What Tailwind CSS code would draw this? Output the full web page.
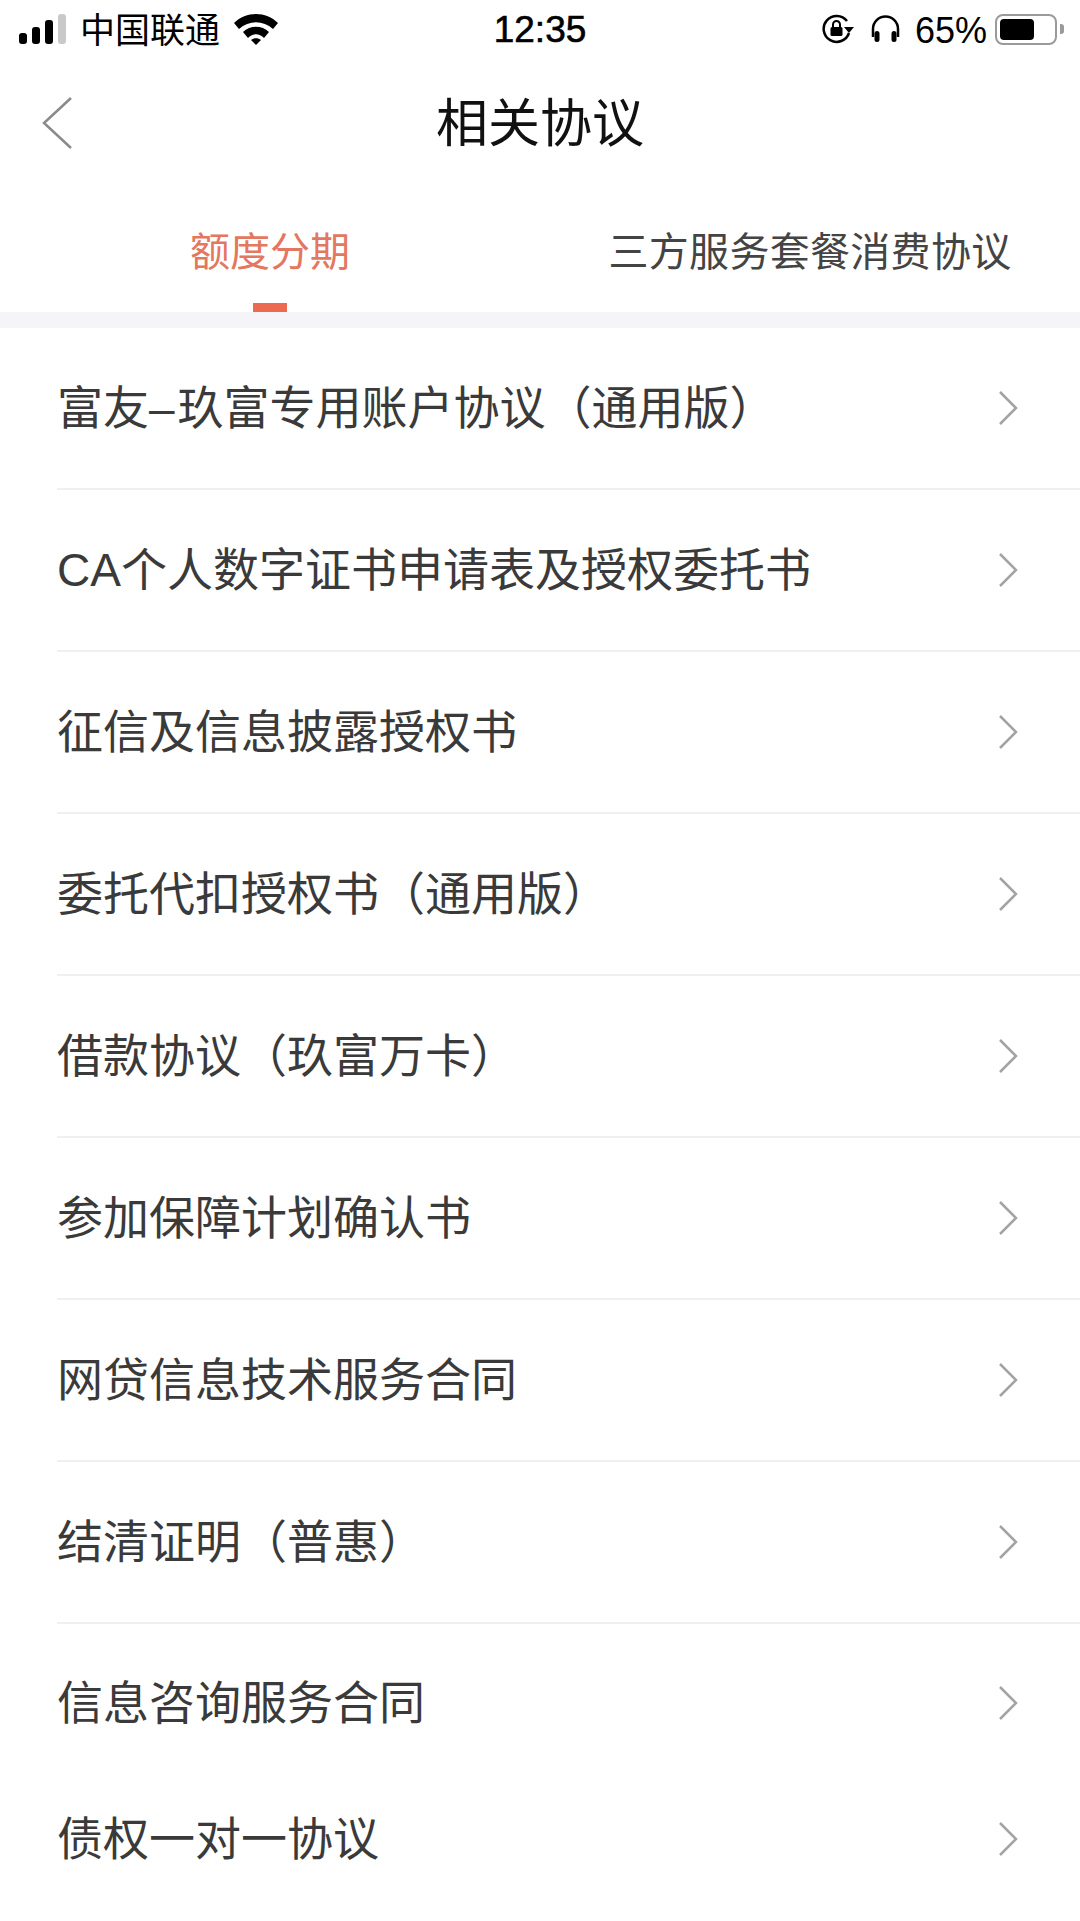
<!DOCTYPE html>
<html lang="zh-CN">
<head>
    <meta charset="UTF-8">
    <title>相关协议</title>
    <script src="https://cdn.jsdelivr.net/npm/@tailwindcss/browser@4"></script>
</head>
<body class="bg-white font-['Liberation_Sans','Noto_Sans_CJK_SC',sans-serif]">
    <div class="w-[1080px] h-[1921px] overflow-hidden bg-white">
        <!-- status bar -->
        <div class="h-[58px] relative flex items-center justify-between text-black">
            <div class="flex items-center pl-[19px]">
                <div class="flex items-end gap-[5px] h-[30px]">
                    <div class="w-[8px] h-[11px] rounded-[3px] bg-black"></div>
                    <div class="w-[8px] h-[17px] rounded-[3px] bg-black"></div>
                    <div class="w-[8px] h-[24px] rounded-[3px] bg-black"></div>
                    <div class="w-[8px] h-[30px] rounded-[3px] bg-[#c9c9c9]"></div>
                </div>
                <span class="ml-[14px] text-[35px] leading-none relative top-[1px]">中国联通</span>
                <svg class="ml-[14px]" width="44" height="32" viewBox="0 0 44 32">
                    <path d="M0 10 C12 -2 32 -2 44 10 L39 16 C29 7 15 7 5 16 Z" fill="#000"/>
                    <path d="M9 19 C16 12 28 12 35 19 L30 25 C25 20 19 20 14 25 Z" fill="#000"/>
                    <path d="M17 27 C20 24.500 24 24.500 27 27 L22 32 Z" fill="#000"/>
                </svg>
            </div>
            <div class="absolute left-0 right-0 top-[10px] text-center text-[37px] leading-[40px] [-webkit-text-stroke:0.6px_black]">12:35</div>
            <div class="flex items-center pr-[16px]">
                <svg width="32" height="30" viewBox="0 0 32 30" fill="none">
                    <path d="M25 7 A13 13 0 1 0 27 19" stroke="#000" stroke-width="2.500"/>
                    <path d="M22 13 L32 13 L27 19 Z" fill="#000"/>
                    <rect x="8.500" y="13" width="12" height="9" rx="1.500" fill="#000"/>
                    <path d="M11 13 V10.500 A3.500 3.500 0 0 1 18 10.500 V13" stroke="#000" stroke-width="2"/>
                </svg>
                <svg class="ml-[17px]" width="29" height="28" viewBox="0 0 29 28" fill="none">
                    <path d="M2 22 V14 A12.500 12.500 0 0 1 27 14 V22" stroke="#000" stroke-width="2.500"/>
                    <rect x="3.500" y="16" width="5" height="11" rx="2.500" fill="#000"/>
                    <rect x="20.500" y="16" width="5" height="11" rx="2.500" fill="#000"/>
                </svg>
                <span class="ml-[15px] text-[36px] leading-none relative top-[2px]">65%</span>
                <div class="ml-[8px] w-[62px] h-[31px] rounded-[8px] border-[2px] border-[#9a9a9a] p-[3px] bg-white">
                    <div class="w-[34px] h-full rounded-[4px] bg-black"></div>
                </div>
                <div class="ml-[3px] w-[4px] h-[10px] rounded-r-[3px] bg-[#9a9a9a]"></div>
            </div>
        </div>

        <!-- nav -->
        <div class="h-[112px] relative flex items-center justify-center">
            <svg class="absolute left-[42px] top-[38px]" width="30" height="54" viewBox="0 0 30 54" fill="none">
                <path d="M29 2 L2 27 L29 52" stroke="#8a8a8a" stroke-width="2.500"/>
            </svg>
            <h1 class="text-[52px] leading-none text-[#111] relative top-[10px]">相关协议</h1>
        </div>

        <!-- tabs -->
        <div class="h-[142px] flex">
            <div class="w-1/2 relative flex justify-center pt-[54px]">
                <span class="text-[40px] leading-[56px] text-[#e3775f]">额度分期</span>
                <div class="absolute bottom-0 left-[253px] w-[34px] h-[9px] bg-[#ec6a4f]"></div>
            </div>
            <div class="w-1/2 flex justify-center pt-[54px]">
                <span class="text-[40px] leading-[56px] tracking-[0.3px] text-[#444]">三方服务套餐消费协议</span>
            </div>
        </div>
        <div class="h-[16px] bg-[#f5f5f9]"></div>

        <!-- list -->
        <div class="pl-[57px] text-[46px] text-[#3a3a3a]">
            <div class="h-[162px] flex items-center justify-between border-b-2 border-[#f0f0f0]">
                <span class="leading-none">富友<span class="tracking-[3px]">–</span>玖富专用账户协议（通用版）</span>
                <svg class="mr-[62px]" width="20" height="36" viewBox="0 0 20 36" fill="none"><path d="M2 2 L18 18 L2 34" stroke="#a3a3a3" stroke-width="2.500"/></svg>
            </div>
            <div class="h-[162px] flex items-center justify-between border-b-2 border-[#f0f0f0]">
                <span class="leading-none">CA个人数字证书申请表及授权委托书</span>
                <svg class="mr-[62px]" width="20" height="36" viewBox="0 0 20 36" fill="none"><path d="M2 2 L18 18 L2 34" stroke="#a3a3a3" stroke-width="2.500"/></svg>
            </div>
            <div class="h-[162px] flex items-center justify-between border-b-2 border-[#f0f0f0]">
                <span class="leading-none">征信及信息披露授权书</span>
                <svg class="mr-[62px]" width="20" height="36" viewBox="0 0 20 36" fill="none"><path d="M2 2 L18 18 L2 34" stroke="#a3a3a3" stroke-width="2.500"/></svg>
            </div>
            <div class="h-[162px] flex items-center justify-between border-b-2 border-[#f0f0f0]">
                <span class="leading-none">委托代扣授权书（通用版）</span>
                <svg class="mr-[62px]" width="20" height="36" viewBox="0 0 20 36" fill="none"><path d="M2 2 L18 18 L2 34" stroke="#a3a3a3" stroke-width="2.500"/></svg>
            </div>
            <div class="h-[162px] flex items-center justify-between border-b-2 border-[#f0f0f0]">
                <span class="leading-none">借款协议（玖富万卡）</span>
                <svg class="mr-[62px]" width="20" height="36" viewBox="0 0 20 36" fill="none"><path d="M2 2 L18 18 L2 34" stroke="#a3a3a3" stroke-width="2.500"/></svg>
            </div>
            <div class="h-[162px] flex items-center justify-between border-b-2 border-[#f0f0f0]">
                <span class="leading-none">参加保障计划确认书</span>
                <svg class="mr-[62px]" width="20" height="36" viewBox="0 0 20 36" fill="none"><path d="M2 2 L18 18 L2 34" stroke="#a3a3a3" stroke-width="2.500"/></svg>
            </div>
            <div class="h-[162px] flex items-center justify-between border-b-2 border-[#f0f0f0]">
                <span class="leading-none">网贷信息技术服务合同</span>
                <svg class="mr-[62px]" width="20" height="36" viewBox="0 0 20 36" fill="none"><path d="M2 2 L18 18 L2 34" stroke="#a3a3a3" stroke-width="2.500"/></svg>
            </div>
            <div class="h-[162px] flex items-center justify-between border-b-2 border-[#f0f0f0]">
                <span class="leading-none">结清证明（普惠）</span>
                <svg class="mr-[62px]" width="20" height="36" viewBox="0 0 20 36" fill="none"><path d="M2 2 L18 18 L2 34" stroke="#a3a3a3" stroke-width="2.500"/></svg>
            </div>
            <div class="h-[162px] pb-[4px] flex items-center justify-between">
                <span class="leading-none">信息咨询服务合同</span>
                <svg class="mr-[62px]" width="20" height="36" viewBox="0 0 20 36" fill="none"><path d="M2 2 L18 18 L2 34" stroke="#a3a3a3" stroke-width="2.500"/></svg>
            </div>
            <div class="h-[110px] -mt-[2px] flex items-center justify-between">
                <span class="leading-none">债权一对一协议</span>
                <svg class="mr-[62px]" width="20" height="36" viewBox="0 0 20 36" fill="none"><path d="M2 2 L18 18 L2 34" stroke="#a3a3a3" stroke-width="2.500"/></svg>
            </div>
        </div>
    </div>
</body>
</html>
